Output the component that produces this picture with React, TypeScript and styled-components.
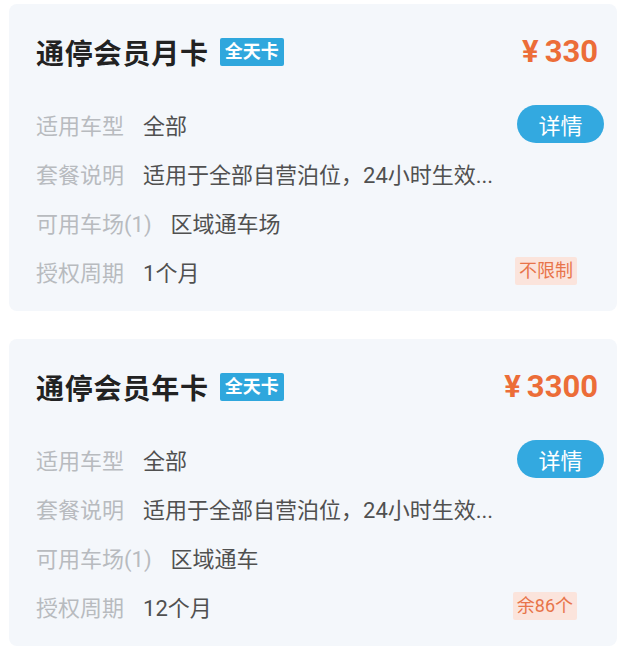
import React from "react";
import styled, { createGlobalStyle } from "styled-components";

const Global = createGlobalStyle`
  html, body { margin: 0; padding: 0; background: #ffffff; }
  body { font-family: Roboto, "Noto Sans CJK SC", sans-serif; }
`;

const Page = styled.div`
  display: flex;
  flex-direction: column;
  gap: 28px;
  padding: 4px 5px 0 9px;
`;

const Card = styled.div`
  background: #f4f7fb;
  border-radius: 8px;
  padding: 0 13px 16px 27px;
  display: flex;
  flex-direction: column;
  height: 307px;
  box-sizing: border-box;
`;

const Header = styled.div`
  height: 95px;
  display: flex;
  align-items: center;
`;

const Title = styled.div`
  font-size: 28px;
  font-weight: 700;
  color: #222222;
  letter-spacing: 0.8px;
`;

const Badge = styled.span`
  margin-left: 11px;
  background: #2fa7dd;
  color: #ffffff;
  font-size: 18px;
  font-weight: 700;
  height: 28px;
  line-height: 28px;
  padding: 0 5px;
  border-radius: 2px;
`;

const Price = styled.div`
  margin-left: auto;
  margin-right: 6px;
  color: #ec6d38;
  font-size: 31px;
  font-weight: 700;
  display: flex;
  align-items: baseline;
  gap: 6px;
`;

const Row = styled.div`
  height: 49px;
  display: flex;
  align-items: center;
  font-size: 22px;
`;

const Label = styled.span`
  color: #b8bbbf;
`;

const Value = styled.span`
  color: #505050;
  margin-left: 19px;
`;

const DetailButton = styled.button`
  margin-left: auto;
  height: 38px;
  width: 87px;
  border: none;
  border-radius: 19px;
  background: #33a9e0;
  color: #ffffff;
  font-family: inherit;
  font-size: 22px;
  padding: 0;
`;

const Tag = styled.span`
  margin-left: auto;
  margin-right: 27px;
  height: 28px;
  line-height: 28px;
  padding: 0 4px;
  background: #fbe4dc;
  color: #e8744a;
  font-size: 18px;
  border-radius: 2px;
`;

type Plan = {
  title: string;
  price: string;
  parking: string;
  period: string;
  tag: string;
};

const plans: Plan[] = [
  { title: "通停会员月卡", price: "330", parking: "区域通车场", period: "1个月", tag: "不限制" },
  { title: "通停会员年卡", price: "3300", parking: "区域通车", period: "12个月", tag: "余86个" },
];

export default function App() {
  return (
    <>
      <Global />
      <Page>
        {plans.map((p) => (
          <Card key={p.title}>
            <Header>
              <Title>{p.title}</Title>
              <Badge>全天卡</Badge>
              <Price>
                <span>¥</span>
                <span>{p.price}</span>
              </Price>
            </Header>
            <Row>
              <Label>适用车型</Label>
              <Value>全部</Value>
              <DetailButton>详情</DetailButton>
            </Row>
            <Row>
              <Label>套餐说明</Label>
              <Value>适用于全部自营泊位，24小时生效...</Value>
            </Row>
            <Row>
              <Label>可用车场(1)</Label>
              <Value>{p.parking}</Value>
            </Row>
            <Row>
              <Label>授权周期</Label>
              <Value>{p.period}</Value>
              <Tag>{p.tag}</Tag>
            </Row>
          </Card>
        ))}
      </Page>
    </>
  );
}
